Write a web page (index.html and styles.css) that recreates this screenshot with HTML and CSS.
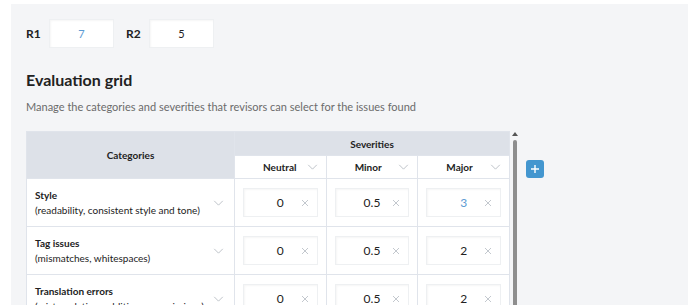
FILE: index.html
```html
<!DOCTYPE html>
<html lang="en">
<head>
    <meta charset="UTF-8">
    <meta name="viewport" content="width=device-width, initial-scale=1.0">
    <title>Evaluation grid</title>
    <link rel="stylesheet" href="styles.css">
</head>
<body>
    <div class="page">
        <div class="refs">
            <label class="ref-label">R1</label>
            <div class="ref-input accent">7</div>
            <label class="ref-label">R2</label>
            <div class="ref-input">5</div>
        </div>

        <h2>Evaluation grid</h2>
        <p class="desc">Manage the categories and severities that revisors can select for the issues found</p>

        <div class="grid-row">
            <table class="grid">
                <thead>
                    <tr>
                        <th class="cat-head" rowspan="2">Categories</th>
                        <th class="sev-head" colspan="3">Severities</th>
                    </tr>
                    <tr class="sev-names">
                        <th><div class="sev">Neutral <svg class="chev" viewBox="0 0 12 7"><path d="M1 1l5 5 5-5"/></svg></div></th>
                        <th><div class="sev">Minor <svg class="chev" viewBox="0 0 12 7"><path d="M1 1l5 5 5-5"/></svg></div></th>
                        <th><div class="sev">Major <svg class="chev" viewBox="0 0 12 7"><path d="M1 1l5 5 5-5"/></svg></div></th>
                    </tr>
                </thead>
                <tbody>
                    <tr>
                        <td class="cat">
                            <div class="cat-box">
                                <div><b>Style</b><br>(readability, consistent style and tone)</div>
                                <svg class="chev" viewBox="0 0 12 7"><path d="M1 1l5 5 5-5"/></svg>
                            </div>
                        </td>
                        <td><div class="num">0<svg class="clear" viewBox="0 0 8 8"><path d="M1 1l6 6M7 1l-6 6"/></svg></div></td>
                        <td><div class="num">0.5<svg class="clear" viewBox="0 0 8 8"><path d="M1 1l6 6M7 1l-6 6"/></svg></div></td>
                        <td><div class="num accent">3<svg class="clear" viewBox="0 0 8 8"><path d="M1 1l6 6M7 1l-6 6"/></svg></div></td>
                    </tr>
                    <tr>
                        <td class="cat">
                            <div class="cat-box">
                                <div><b>Tag issues</b><br>(mismatches, whitespaces)</div>
                                <svg class="chev" viewBox="0 0 12 7"><path d="M1 1l5 5 5-5"/></svg>
                            </div>
                        </td>
                        <td><div class="num">0<svg class="clear" viewBox="0 0 8 8"><path d="M1 1l6 6M7 1l-6 6"/></svg></div></td>
                        <td><div class="num">0.5<svg class="clear" viewBox="0 0 8 8"><path d="M1 1l6 6M7 1l-6 6"/></svg></div></td>
                        <td><div class="num">2<svg class="clear" viewBox="0 0 8 8"><path d="M1 1l6 6M7 1l-6 6"/></svg></div></td>
                    </tr>
                    <tr>
                        <td class="cat">
                            <div class="cat-box">
                                <div><b>Translation errors</b><br>(mistranslation, additions or omissions)</div>
                                <svg class="chev" viewBox="0 0 12 7"><path d="M1 1l5 5 5-5"/></svg>
                            </div>
                        </td>
                        <td><div class="num">0<svg class="clear" viewBox="0 0 8 8"><path d="M1 1l6 6M7 1l-6 6"/></svg></div></td>
                        <td><div class="num">0.5<svg class="clear" viewBox="0 0 8 8"><path d="M1 1l6 6M7 1l-6 6"/></svg></div></td>
                        <td><div class="num">2<svg class="clear" viewBox="0 0 8 8"><path d="M1 1l6 6M7 1l-6 6"/></svg></div></td>
                    </tr>
                </tbody>
            </table>

            <div class="scrollbar">
                <div class="scroll-arrow"></div>
                <div class="scroll-thumb"></div>
            </div>

            <button class="add-btn" title="Add severity">
                <svg viewBox="0 0 10 10"><path d="M5 1v8M1 5h8"/></svg>
            </button>
        </div>
    </div>
</body>
</html>
```

FILE: styles.css
```css
* {
    margin: 0;
    padding: 0;
    box-sizing: border-box;
}

html, body {
    height: 100%;
    overflow: hidden;
}

body {
    font-family: Lato, 'Open Sans', sans-serif;
    background: #fff;
    color: #222;
    font-size: 11px;
    padding: 4px 0 0 11px;
}

.page {
    background: #f4f5f7;
    min-height: 100%;
    padding: 15px 15px 0 15px;
}

.refs {
    display: flex;
    align-items: center;
    height: 29px;
}

.ref-label {
    font-weight: 700;
    font-size: 12px;
    width: 23px;
}

.ref-input {
    width: 65px;
    height: 29px;
    background: #fff;
    border: 1px solid #eef0f2;
    box-shadow: inset 1px 1px 2px rgba(0, 0, 0, 0.04);
    display: flex;
    align-items: center;
    justify-content: center;
    font-size: 11px;
    margin-right: 12px;
}

.accent {
    color: #5d9bd3;
}

h2 {
    font-size: 16px;
    font-weight: 700;
    margin-top: 22px;
    line-height: 20px;
}

.desc {
    color: #6b6b6b;
    font-size: 11px;
    margin-top: 9px;
    line-height: 16px;
}

.grid-row {
    display: flex;
    align-items: flex-start;
    margin-top: 16px;
}

.grid {
    border-collapse: collapse;
    width: 484px;
    table-layout: fixed;
    background: #fff;
}

.grid th, .grid td {
    border: 1px solid #e0e4eb;
}

.cat-head {
    width: 208px;
    background: #dde1e8;
    font-size: 10px;
    font-weight: 700;
}

.sev-head {
    background: #dde1e8;
    height: 24px;
    font-size: 10px;
    font-weight: 700;
}

.sev-names th {
    height: 23px;
    font-size: 10px;
    font-weight: 700;
}

.sev {
    display: flex;
    align-items: center;
    justify-content: space-between;
    padding: 0 8px 0 28px;
}

.chev {
    width: 11px;
    height: 6px;
    fill: none;
    stroke: #b4b9c0;
    stroke-width: 1;
}

.grid td {
    height: 48px;
    padding: 8px;
    vertical-align: middle;
}

.cat-box {
    display: flex;
    align-items: center;
    justify-content: space-between;
    font-size: 10px;
    line-height: 15px;
    padding-right: 2px;
}

.cat-box b {
    font-weight: 700;
}

.num {
    position: relative;
    height: 29px;
    background: #fff;
    border: 1px solid #eef0f2;
    box-shadow: inset 1px 1px 2px rgba(0, 0, 0, 0.04);
    display: flex;
    align-items: center;
    justify-content: center;
    font-size: 12px;
}

.clear {
    position: absolute;
    right: 8px;
    top: 10px;
    width: 8px;
    height: 8px;
    fill: none;
    stroke: #c3c8ce;
    stroke-width: 1;
}

.scrollbar {
    width: 8px;
    margin-left: 1px;
    display: flex;
    flex-direction: column;
    align-items: center;
    height: 200px;
}

.scroll-arrow {
    width: 0;
    height: 0;
    border-left: 3px solid transparent;
    border-right: 3px solid transparent;
    border-bottom: 4px solid #555;
    margin-top: 1px;
}

.scroll-thumb {
    width: 4px;
    flex: 1;
    background: #8e8e8e;
    border-radius: 2px;
    margin-top: 4px;
}

.add-btn {
    width: 18px;
    height: 18px;
    margin: 29px 0 0 7px;
    background: #4396cf;
    border: none;
    border-radius: 3px;
    display: flex;
    align-items: center;
    justify-content: center;
}

.add-btn svg {
    width: 10px;
    height: 10px;
    fill: none;
    stroke: #fff;
    stroke-width: 1.4;
}
```
